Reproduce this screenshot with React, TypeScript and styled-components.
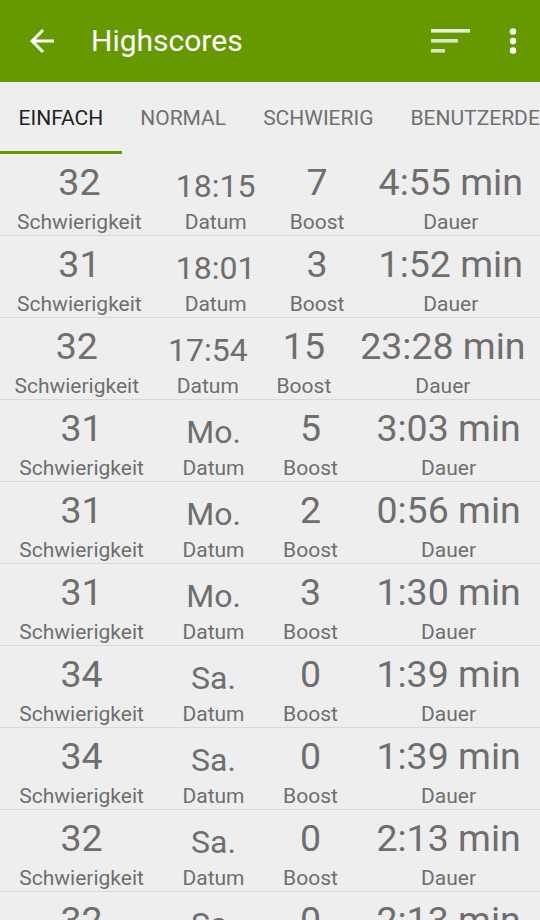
import React, { FC } from 'react';
import styled, { createGlobalStyle } from 'styled-components';

const GlobalStyle = createGlobalStyle`
  html, body, #root {
    margin: 0;
    height: 100%;
    overflow: hidden;
  }

  body {
    background: #eeeeee;
    font-family: Roboto, 'Liberation Sans', sans-serif;
  }
`;

const Screen = styled.div({
  display: 'flex',
  flexDirection: 'column',
  height: '100%',
  background: '#eeeeee',
});

const AppBar = styled.header({
  display: 'flex',
  alignItems: 'center',
  height: '82px',
  flexShrink: 0,
  padding: '0 23px 0 24px',
  boxSizing: 'border-box',
  background: '#669900',
  color: '#ffffff',
});

const BackButton = styled.svg({
  width: '36px',
  height: '36px',
  flexShrink: 0,
});

const Title = styled.h1({
  flex: 1,
  margin: '0 0 0 31px',
  fontSize: '30px',
  fontWeight: 400,
  lineHeight: '36px',
});

const Actions = styled.div({
  display: 'flex',
  alignItems: 'center',
  gap: '38px',
});

const TabBar = styled.nav({
  display: 'flex',
  height: '72px',
  flexShrink: 0,
  overflow: 'hidden',
  whiteSpace: 'nowrap',
});

const Tab = styled.div<{ $active?: boolean }>(({ $active }) => ({
  position: 'relative',
  display: 'flex',
  alignItems: 'center',
  flexShrink: 0,
  padding: '0 18.5px',
  fontSize: '21px',
  textTransform: 'uppercase',
  color: $active ? '#222222' : '#707070',

  '&::after': {
    content: '""',
    position: 'absolute',
    left: 0,
    right: 0,
    bottom: 0,
    height: '3px',
    background: $active ? '#669900' : 'transparent',
  },
}));

const List = styled.div({
  flex: 1,
  overflow: 'hidden',
});

const Row = styled.div({
  display: 'flex',
  height: '82px',
  boxSizing: 'border-box',
  borderBottom: '1px solid #d8d8d8',
  whiteSpace: 'nowrap',
  color: '#6e6e6e',
});

const Cell = styled.div({
  flex: '1 1 auto',
  display: 'flex',
  flexDirection: 'column',
  alignItems: 'center',
  paddingTop: '6px',
});

const Value = styled.div<{ $date?: boolean }>(({ $date }) => ({
  height: '44px',
  fontSize: $date ? '32px' : '37.5px',
  lineHeight: $date ? '52px' : '44px',
}));

const Label = styled.div({
  marginTop: '6px',
  fontSize: '21px',
  lineHeight: '24px',
});

interface Score {
  readonly level: string;
  readonly date: string;
  readonly boost: string;
  readonly duration: string;
}

const scores: Score[] = [
  { level: '32', date: '18:15', boost: '7', duration: '4:55 min' },
  { level: '31', date: '18:01', boost: '3', duration: '1:52 min' },
  { level: '32', date: '17:54', boost: '15', duration: '23:28 min' },
  { level: '31', date: 'Mo.', boost: '5', duration: '3:03 min' },
  { level: '31', date: 'Mo.', boost: '2', duration: '0:56 min' },
  { level: '31', date: 'Mo.', boost: '3', duration: '1:30 min' },
  { level: '34', date: 'Sa.', boost: '0', duration: '1:39 min' },
  { level: '34', date: 'Sa.', boost: '0', duration: '1:39 min' },
  { level: '32', date: 'Sa.', boost: '0', duration: '2:13 min' },
  { level: '32', date: 'Sa.', boost: '0', duration: '2:13 min' },
];

const tabs = ['Einfach', 'Normal', 'Schwierig', 'Benutzerdefiniert'];

const ScoreRow: FC<{ score: Score }> = ({ score }) => (
  <Row>
    <Cell>
      <Value>{score.level}</Value>
      <Label>Schwierigkeit</Label>
    </Cell>
    <Cell>
      <Value $date>{score.date}</Value>
      <Label>Datum</Label>
    </Cell>
    <Cell>
      <Value>{score.boost}</Value>
      <Label>Boost</Label>
    </Cell>
    <Cell>
      <Value>{score.duration}</Value>
      <Label>Dauer</Label>
    </Cell>
  </Row>
);

const App: FC = () => (
  <Screen>
    <GlobalStyle />
    <AppBar>
      <BackButton viewBox="0 0 24 24">
        <path fill="#ffffff" d="M20 11H7.83l5.59-5.59L12 4l-8 8 8 8 1.41-1.41L7.83 13H20v-2z" />
      </BackButton>
      <Title>Highscores</Title>
      <Actions>
        <svg width="40" height="26" viewBox="0 0 40 26">
          <rect x="0" y="1" width="39" height="3.6" fill="#e6eddb" />
          <rect x="0" y="11" width="27" height="3.6" fill="#dbe6c8" />
          <rect x="0" y="21" width="14" height="3.6" fill="#dbe6c8" />
        </svg>
        <svg width="8" height="28" viewBox="0 0 8 28">
          <circle cx="4" cy="4.5" r="3.2" fill="#ffffff" />
          <circle cx="4" cy="14" r="3.2" fill="#ffffff" />
          <circle cx="4" cy="23.5" r="3.2" fill="#ffffff" />
        </svg>
      </Actions>
    </AppBar>
    <TabBar>
      {tabs.map((tab, i) => (
        <Tab key={tab} $active={i === 0}>{tab}</Tab>
      ))}
    </TabBar>
    <List>
      {scores.map((score, i) => (
        <ScoreRow key={i} score={score} />
      ))}
    </List>
  </Screen>
);

export default App;
